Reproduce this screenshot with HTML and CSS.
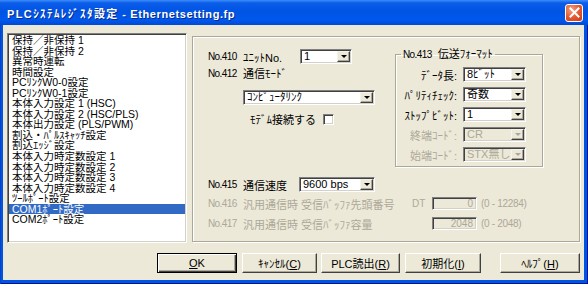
FILE: index.html
```html
<!DOCTYPE html>
<html lang="ja">
  <head>
    <meta charset="UTF-8" />
    <title>PLCｼｽﾃﾑﾚｼﾞｽﾀ設定</title>
    <link rel="stylesheet" href="styles.css">
  </head>
  <body>
    <div class="window">
      <div class="titlebar">
        <span class="title"><span class="kana">PLCｼｽﾃﾑﾚｼﾞｽﾀ設定</span> - Ethernetsetting.fp</span>
        <span class="close-btn">
          <svg width="11" height="11" viewBox="0 0 11 11">
            <path d="M1.5 1.5 L9.5 9.5 M9.5 1.5 L1.5 9.5" stroke="#fff" stroke-width="2" stroke-linecap="square" fill="none"/>
          </svg>
        </span>
      </div>

      <div class="client">
        <div class="main">
          <ul class="listbox">
            <li>保持／非保持 1</li>
            <li>保持／非保持 2</li>
            <li>異常時運転</li>
            <li>時間設定</li>
            <li>PCﾘﾝｸW0-0設定</li>
            <li>PCﾘﾝｸW0-1設定</li>
            <li>本体入力設定 1 (HSC)</li>
            <li>本体入力設定 2 (HSC/PLS)</li>
            <li>本体出力設定 (PLS/PWM)</li>
            <li>割込・ﾊﾟﾙｽｷｬｯﾁ設定</li>
            <li>割込ｴｯｼﾞ設定</li>
            <li>本体入力時定数設定 1</li>
            <li>本体入力時定数設定 2</li>
            <li>本体入力時定数設定 3</li>
            <li>本体入力時定数設定 4</li>
            <li>ﾂｰﾙﾎﾟｰﾄ設定</li>
            <li class="selected">COM1ﾎﾟｰﾄ設定</li>
            <li>COM2ﾎﾟｰﾄ設定</li>
          </ul>

          <div class="panel">
            <div class="top">
              <div class="left-col">
                <div class="row">
                  <span class="num">No.410</span>
                  <span class="lbl unit-lbl">ﾕﾆｯﾄNo.</span>
                  <div class="combo unit-combo"><span class="val">1</span><span class="drop"></span></div>
                </div>
                <div class="row mode-row">
                  <span class="num">No.412</span>
                  <span class="lbl">通信ﾓｰﾄﾞ</span>
                </div>
                <div class="combo mode-combo"><span class="val">ｺﾝﾋﾟｭｰﾀﾘﾝｸ</span><span class="drop"></span></div>
                <div class="modem-row">
                  <span>ﾓﾃﾞﾑ接続する</span>
                  <span class="check"></span>
                </div>
              </div>

              <fieldset class="group">
                <legend><span class="num-in">No.413</span>&nbsp; 伝送ﾌｫｰﾏｯﾄ</legend>
                <div class="frow">
                  <span class="flbl">ﾃﾞｰﾀ長:</span>
                  <div class="combo fcombo"><span class="val">8ﾋﾞｯﾄ</span><span class="drop"></span></div>
                </div>
                <div class="frow">
                  <span class="flbl">ﾊﾟﾘﾃｨﾁｪｯｸ:</span>
                  <div class="combo fcombo"><span class="val">奇数</span><span class="drop"></span></div>
                </div>
                <div class="frow">
                  <span class="flbl">ｽﾄｯﾌﾟﾋﾞｯﾄ:</span>
                  <div class="combo fcombo"><span class="val">1</span><span class="drop"></span></div>
                </div>
                <div class="frow disabled">
                  <span class="flbl">終端ｺｰﾄﾞ:</span>
                  <div class="combo fcombo"><span class="val">CR</span><span class="drop"></span></div>
                </div>
                <div class="frow disabled">
                  <span class="flbl">始端ｺｰﾄﾞ:</span>
                  <div class="combo fcombo"><span class="val">STX無し</span><span class="drop"></span></div>
                </div>
              </fieldset>
            </div>

            <div class="row speed-row">
              <span class="num">No.415</span>
              <span class="lbl speed-lbl">通信速度</span>
              <div class="combo speed-combo"><span class="val">9600 bps</span><span class="drop"></span></div>
            </div>
            <div class="row buf-row disabled">
              <span class="num">No.416</span>
              <span class="desc">汎用通信時 受信ﾊﾞｯﾌｧ先頭番号</span>
              <span class="dt">DT</span>
              <span class="textbox">0</span>
              <span class="range">(0 - 12284)</span>
            </div>
            <div class="row buf-row buf-row2 disabled">
              <span class="num">No.417</span>
              <span class="desc">汎用通信時 受信ﾊﾞｯﾌｧ容量</span>
              <span class="dt"></span>
              <span class="textbox">2048</span>
              <span class="range">(0 - 2048)</span>
            </div>
          </div>
        </div>

        <div class="buttons">
          <button class="btn default btn-ok"><u>O</u>K</button>
          <button class="btn btn-cancel">ｷｬﾝｾﾙ(<u>C</u>)</button>
          <button class="btn btn-read">PLC読出(<u>R</u>)</button>
          <button class="btn btn-init">初期化(<u>I</u>)</button>
          <button class="btn btn-help">ﾍﾙﾌﾟ(<u>H</u>)</button>
        </div>
      </div>
    </div>
  </body>
</html>
```

FILE: styles.css
```css
* {
  box-sizing: border-box;
}
html, body {
  margin: 0;
  padding: 0;
}
body {
  width: 588px;
  height: 284px;
  overflow: hidden;
  font-family: "Liberation Sans", "Noto Sans CJK JP", sans-serif;
  font-size: 11px;
  color: #000;
  background: #0054e3;
}
.window {
  width: 588px;
  height: 284px;
  display: flex;
  flex-direction: column;
  background: #0054e3;
  box-shadow: inset 1px 0 #0842c7, inset -1px 0 #00138c, inset 0 -1px #00138c;
}

/* title bar */
.titlebar {
  height: 25px;
  flex: none;
  display: flex;
  align-items: center;
  justify-content: space-between;
  padding: 0 5px 0 7px;
  background: linear-gradient(#3d8efc 0, #0a5ce8 3px, #0054e3 12px, #0058ec 20px, #0049d6 25px);
}
.title {
  color: #fff;
  font-weight: bold;
  font-size: 11px;
  letter-spacing: 0.6px;
  text-shadow: 1px 1px #0a2a8c;
  white-space: nowrap;
}
.title .kana {
  letter-spacing: 1.4px;
}
.close-btn {
  width: 18px;
  height: 18px;
  border: 1px solid #fff;
  border-radius: 3px;
  background: radial-gradient(circle at 35% 30%, #f3a184 0, #e2552d 55%, #c73d1c 100%);
  display: flex;
  align-items: center;
  justify-content: center;
}

/* client area */
.client {
  flex: 1;
  margin: 0 4px 4px 3px;
  background: #ece9d8;
  padding: 8px 4px 0 4px;
}
.main {
  display: flex;
  align-items: flex-start;
  height: 210px;
}

.listbox {
  width: 180px;
  height: 210px;
  margin: 0;
  padding: 1px;
  list-style: none;
  overflow: hidden;
  background: #fff;
  border: 1px solid;
  border-color: #808080 #fff #fff #808080;
  box-shadow: inset 1px 1px #404040, inset -1px -1px #d4d0c8;
  font-size: 10.5px;
  line-height: 10.55px;
}
.listbox li {
  padding-left: 3px;
  white-space: nowrap;
}
.listbox li.selected {
  background: #316ac5;
  color: #fff;
}

.panel {
  width: 388px;
  height: 206px;
  margin: 3px 0 0 5px;
  padding: 12px 0 0 15px;
  border: 1px solid #aca899;
  box-shadow: 1px 1px 0 #fff, inset 1px 1px 0 #fff;
}
.top {
  display: flex;
  align-items: flex-start;
}
.left-col {
  width: 187px;
}
.row {
  display: flex;
  align-items: center;
  height: 15px;
  white-space: nowrap;
}
.num {
  width: 35px;
  flex: none;
  font-size: 10px;
  letter-spacing: -0.6px;
}
.num-in {
  font-size: 10px;
  letter-spacing: -0.6px;
}
.unit-lbl {
  width: 57px;
}
.unit-combo {
  width: 52px;
}
.mode-row {
  margin-top: 2px;
  height: 14px;
}
.mode-combo {
  width: 132px;
  margin: 10px 0 0 35px;
}
.modem-row {
  display: flex;
  align-items: center;
  height: 12px;
  margin: 8px 0 0 42px;
  white-space: nowrap;
}
.check {
  width: 11px;
  height: 11px;
  margin-left: 7px;
  background: #fff;
  border: 1px solid;
  border-color: #808080 #fff #fff #808080;
  box-shadow: inset 1px 1px #404040, inset -1px -1px #d4d0c8;
}

/* combo box */
.combo {
  display: flex;
  height: 15px;
  padding: 1px;
  background: #fff;
  border: 1px solid;
  border-color: #808080 #fff #fff #808080;
  box-shadow: inset 1px 1px #404040, inset -1px -1px #d4d0c8;
}
.combo .val {
  flex: 1;
  padding-left: 2px;
  line-height: 11px;
  white-space: nowrap;
  overflow: hidden;
}
.combo .drop {
  width: 13px;
  flex: none;
  display: flex;
  align-items: center;
  justify-content: center;
  background: #ece9d8;
  border: 1px solid;
  border-color: #f4f3ee #404040 #404040 #f4f3ee;
  box-shadow: inset -1px -1px #aca899;
}
.combo .drop::after {
  content: "";
  border-left: 3px solid transparent;
  border-right: 3px solid transparent;
  border-top: 3px solid #000;
}

/* transmission format group */
.group {
  width: 148px;
  margin: 0;
  padding: 7px 0 4px 0;
  border: 1px solid #aca899;
  box-shadow: 1px 1px 0 #fff, inset 1px 1px 0 #fff;
  min-inline-size: 0;
}
.group legend {
  margin-left: 5px;
  padding: 0 2px;
  line-height: 11px;
  white-space: nowrap;
}
.frow {
  display: flex;
  align-items: center;
  height: 15px;
  margin-bottom: 5px;
}
.frow:last-child {
  margin-bottom: 0;
}
.flbl {
  width: 67px;
  padding-right: 6px;
  text-align: right;
  white-space: nowrap;
}
.fcombo {
  width: 63px;
}

.disabled {
  color: #aca899;
}
.disabled .combo {
  background: #ece9d8;
}
.disabled .combo .drop::after {
  border-top-color: #aca899;
}

/* lower rows */
.speed-row {
  margin-top: 10px;
}
.speed-lbl {
  width: 56px;
}
.speed-combo {
  width: 76px;
}
.buf-row {
  margin-top: 5px;
  height: 13px;
}
.buf-row2 {
  margin-top: 7px;
}
.desc {
  width: 169px;
  flex: none;
}
.dt {
  width: 20px;
  flex: none;
  font-size: 10px;
}
.textbox {
  width: 45px;
  height: 13px;
  padding-right: 3px;
  text-align: right;
  line-height: 11px;
  font-size: 10px;
  border: 1px solid;
  border-color: #808080 #fff #fff #808080;
  box-shadow: inset 1px 1px #404040, inset -1px -1px #d4d0c8;
}
.range {
  margin-left: 4px;
  font-size: 10px;
  letter-spacing: -0.3px;
}

/* buttons */
.buttons {
  display: flex;
  margin-top: 10px;
  padding-left: 150px;
}
.btn {
  height: 20px;
  padding: 0;
  font-family: inherit;
  font-size: 11px;
  color: #000;
  background: #ece9d8;
  border: 1px solid;
  border-color: #fff #404040 #404040 #fff;
  box-shadow: inset -1px -1px #aca899;
}
.btn.default {
  border: 1px solid #000;
  box-shadow: inset 1px 1px #fff, inset -1px -1px #404040, inset -2px -2px #aca899;
}
.btn-ok {
  width: 80px;
}
.btn-cancel {
  width: 75px;
  margin-left: 5px;
}
.btn-read {
  width: 79px;
  margin-left: 4px;
}
.btn-init {
  width: 76px;
  margin-left: 5px;
}
.btn-help {
  width: 80px;
  margin-left: 19px;
}
```
